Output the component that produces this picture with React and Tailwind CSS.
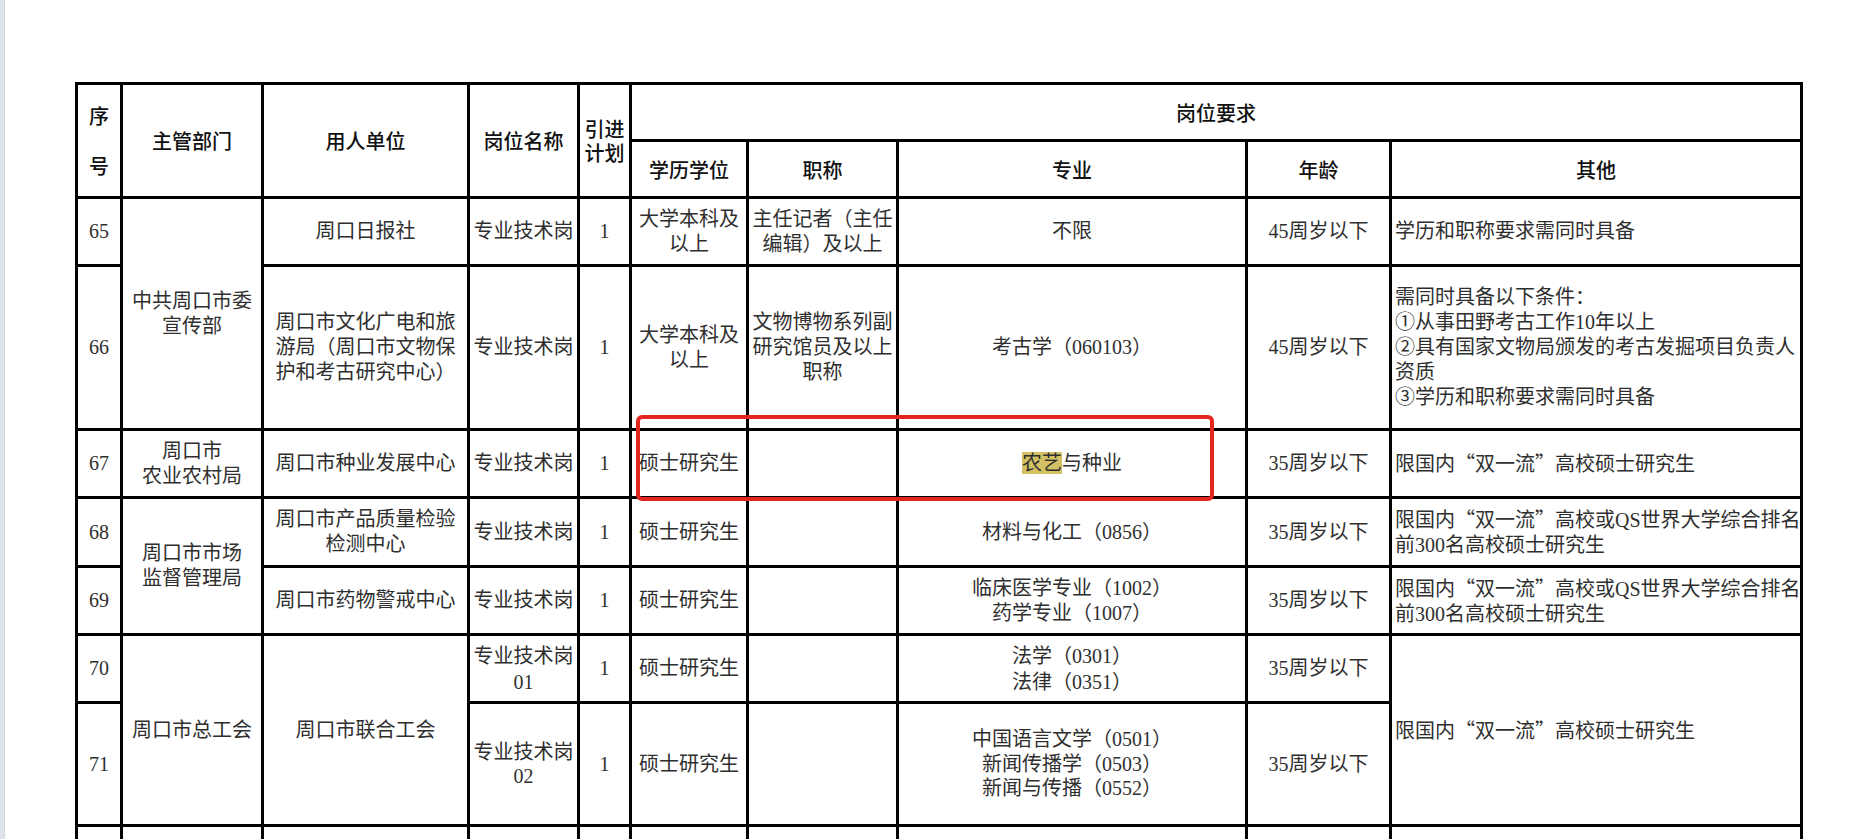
const td = "border-[3px] border-black text-center align-middle px-0 whitespace-nowrap text-[20px] leading-[25px] text-[#2f2f2f] font-['Liberation_Serif','Noto_Sans_CJK_SC',serif]";
const th = "border-[3px] border-black text-center align-middle px-0 whitespace-nowrap text-[20px] leading-[25px] text-[#111] font-medium font-['Noto_Sans_CJK_SC',sans-serif]";
const other = "border-[3px] border-black text-left align-middle pl-[3px] pr-0 text-[20px] leading-[25px] text-[#2f2f2f] whitespace-nowrap font-['Liberation_Serif','Noto_Sans_CJK_SC',serif]";

function Q({ children }) {
  return <span className="font-['Noto_Sans_CJK_SC',sans-serif]">{children}</span>;
}

function DoubleFirst({ qs }) {
  return (
    <>
      限国内<Q>“</Q>双一流<Q>”</Q>高校{qs ? "或QS世界大学综合排名" : "硕士研究生"}
    </>
  );
}

export default function App() {
  return (
    <div className="min-h-screen bg-white flex">
      <div className="w-[5px] shrink-0 bg-[#dfe3ea] border-r border-[#d3d8e0]" />
      <div className="relative flex-1 pt-[82px] pl-[70px]">
        <table className="border-collapse table-fixed w-[1728px]">
          <colgroup>
            <col className="w-[45px]" />
            <col className="w-[141px]" />
            <col className="w-[206px]" />
            <col className="w-[110px]" />
            <col className="w-[52px]" />
            <col className="w-[117px]" />
            <col className="w-[150px]" />
            <col className="w-[349px]" />
            <col className="w-[144px]" />
            <col className="w-[411px]" />
          </colgroup>
          <thead>
            <tr className="h-[57px]">
              <th rowSpan={2} className={th}>
                <div className="flex flex-col items-center gap-[25px]">
                  <span>序</span>
                  <span>号</span>
                </div>
              </th>
              <th rowSpan={2} className={th}>主管部门</th>
              <th rowSpan={2} className={th}>用人单位</th>
              <th rowSpan={2} className={th}>岗位名称</th>
              <th rowSpan={2} className={th}>
                <div className="leading-[24px]">引进<br />计划</div>
              </th>
              <th colSpan={5} className={th}>岗位要求</th>
            </tr>
            <tr className="h-[57px]">
              <th className={th}>学历学位</th>
              <th className={th}>职称</th>
              <th className={th}>专业</th>
              <th className={th}>年龄</th>
              <th className={th}>其他</th>
            </tr>
          </thead>
          <tbody>
            <tr className="h-[68px]">
              <td className={td}>65</td>
              <td rowSpan={2} className={td}>中共周口市委<br />宣传部</td>
              <td className={td}>周口日报社</td>
              <td className={td}>专业技术岗</td>
              <td className={td}>1</td>
              <td className={td}>大学本科及<br />以上</td>
              <td className={td}>主任记者（主任<br />编辑）及以上</td>
              <td className={td}>不限</td>
              <td className={td}>45周岁以下</td>
              <td className={other}>学历和职称要求需同时具备</td>
            </tr>
            <tr className="h-[164px]">
              <td className={td}>66</td>
              <td className={td}>周口市文化广电和旅<br />游局（周口市文物保<br />护和考古研究中心）</td>
              <td className={td}>专业技术岗</td>
              <td className={td}>1</td>
              <td className={td}>大学本科及<br />以上</td>
              <td className={td}>文物博物系列副<br />研究馆员及以上<br />职称</td>
              <td className={td}>考古学（060103）</td>
              <td className={td}>45周岁以下</td>
              <td className={other}>
                需同时具备以下条件：<br />
                ①从事田野考古工作10年以上<br />
                ②具有国家文物局颁发的考古发掘项目负责人<br />
                资质<br />
                ③学历和职称要求需同时具备
              </td>
            </tr>
            <tr className="h-[68px]">
              <td className={td}>67</td>
              <td className={td}>周口市<br />农业农村局</td>
              <td className={td}>周口市种业发展中心</td>
              <td className={td}>专业技术岗</td>
              <td className={td}>1</td>
              <td className={td}>硕士研究生</td>
              <td className={td}></td>
              <td className={td}>
                <span className="bg-[#d3c164]">农艺</span>与种业
              </td>
              <td className={td}>35周岁以下</td>
              <td className={other}><DoubleFirst /></td>
            </tr>
            <tr className="h-[69px]">
              <td className={td}>68</td>
              <td rowSpan={2} className={td}>周口市市场<br />监督管理局</td>
              <td className={td}>周口市产品质量检验<br />检测中心</td>
              <td className={td}>专业技术岗</td>
              <td className={td}>1</td>
              <td className={td}>硕士研究生</td>
              <td className={td}></td>
              <td className={td}>材料与化工（0856）</td>
              <td className={td}>35周岁以下</td>
              <td className={other}><DoubleFirst qs /><br />前300名高校硕士研究生</td>
            </tr>
            <tr className="h-[68px]">
              <td className={td}>69</td>
              <td className={td}>周口市药物警戒中心</td>
              <td className={td}>专业技术岗</td>
              <td className={td}>1</td>
              <td className={td}>硕士研究生</td>
              <td className={td}></td>
              <td className={td}>临床医学专业（1002）<br />药学专业（1007）</td>
              <td className={td}>35周岁以下</td>
              <td className={other}><DoubleFirst qs /><br />前300名高校硕士研究生</td>
            </tr>
            <tr className="h-[68px]">
              <td className={td}>70</td>
              <td rowSpan={2} className={td}>周口市总工会</td>
              <td rowSpan={2} className={td}>周口市联合工会</td>
              <td className={td}><div className="leading-[26px]">专业技术岗<br />01</div></td>
              <td className={td}>1</td>
              <td className={td}>硕士研究生</td>
              <td className={td}></td>
              <td className={td}><div className="leading-[26px]">法学（0301）<br />法律（0351）</div></td>
              <td className={td}>35周岁以下</td>
              <td rowSpan={2} className={other}><DoubleFirst /></td>
            </tr>
            <tr className="h-[123px]">
              <td className={td}>71</td>
              <td className={td}><div className="leading-[24px]">专业技术岗<br />02</div></td>
              <td className={td}>1</td>
              <td className={td}>硕士研究生</td>
              <td className={td}></td>
              <td className={td}>
                <div className="leading-[24.5px]">中国语言文学（0501）<br />新闻传播学（0503）<br />新闻与传播（0552）</div>
              </td>
              <td className={td}>35周岁以下</td>
            </tr>
            <tr className="h-[90px]">
              <td className={td}></td>
              <td className={td}></td>
              <td className={td}></td>
              <td className={td}></td>
              <td className={td}></td>
              <td className={td}></td>
              <td className={td}></td>
              <td className={td}></td>
              <td className={td}></td>
              <td className={td}></td>
            </tr>
          </tbody>
        </table>
        <div className="absolute left-[631px] top-[415px] w-[578px] h-[86px] border-[4px] border-[#e5261f] rounded-[6px] pointer-events-none" />
      </div>
    </div>
  );
}
